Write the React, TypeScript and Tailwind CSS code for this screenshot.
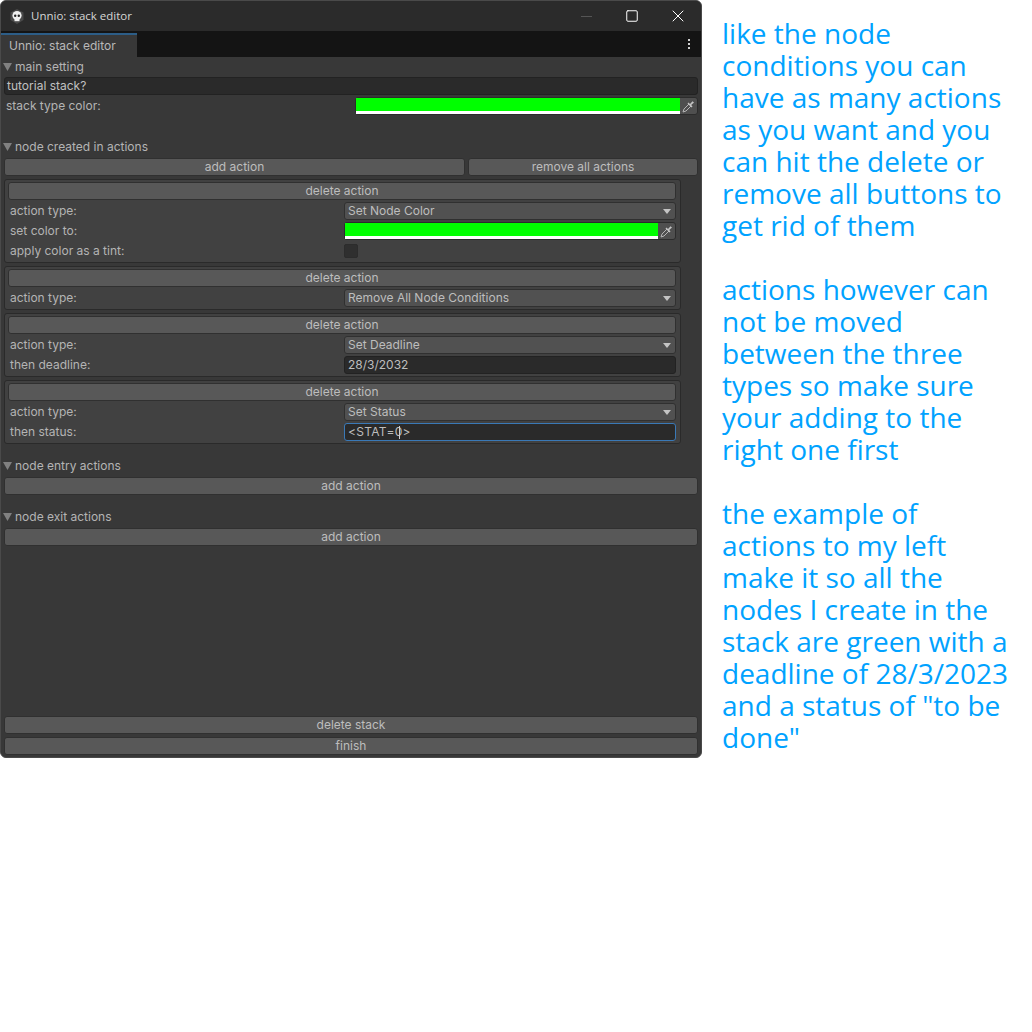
import { Square, X } from 'lucide-react';

const btn =
  'flex h-[18px] items-center justify-center rounded-[3px] border border-[#303030] bg-[#585858] text-[12px] leading-none text-[#bdbdbd]';

function Foldout({ label, className = '' }: { label: string; className?: string }) {
  return (
    <div className={`-mx-[3px] flex h-[19px] items-center pl-[2px] text-[12px] text-[#b4b4b4] ${className}`}>
      <svg width="9" height="8" viewBox="0 0 9 8" className="mr-[3px] mt-[1px]">
        <path d="M0 0H9L4.5 8Z" fill="#808080" />
      </svg>
      {label}
    </div>
  );
}

function Pipette() {
  return (
    <svg width="13" height="13" viewBox="0 0 13 13">
      <path d="M1 12L2 9L7 4L9 6L4 11Z" fill="none" stroke="#b4b4b4" strokeWidth="1" />
      <path d="M6.5 2.5L8 4L10.5 1.2L12 2.6L9.2 5L10.5 6.5L9.5 7.5L5.5 3.5Z" fill="#c4c4c4" />
    </svg>
  );
}

function ColorField({ className = '' }: { className?: string }) {
  return (
    <div className={`flex h-[18px] items-stretch rounded-[3px] border border-[#2c2c2c] bg-[#4f4f4f] ${className}`}>
      <div className="flex flex-1 flex-col">
        <div className="flex-1 bg-[#00ff00]" />
        <div className="h-[3px] bg-white" />
      </div>
      <div className="flex w-[17px] items-center justify-center">
        <Pipette />
      </div>
    </div>
  );
}

function Select({ value }: { value: string }) {
  return (
    <div className="flex h-[18px] w-[332px] items-center justify-between rounded-[3px] border border-[#303030] bg-[#515151] pl-[3px] pr-[4px] text-[12px] text-[#bdbdbd]">
      {value}
      <svg width="8" height="5" viewBox="0 0 8 5">
        <path d="M0 0H8L4 5Z" fill="#c4c4c4" />
      </svg>
    </div>
  );
}

function Row({ label, children }: { label: string; children: React.ReactNode }) {
  return (
    <div className="mt-[2px] flex h-[18px] items-center">
      <div className="w-[336px] pl-[2px] text-[12px] text-[#b4b4b4]">{label}</div>
      {children}
    </div>
  );
}

function ActionBox({ children }: { children: React.ReactNode }) {
  return (
    <div className="mb-[3px] w-[677px] rounded-[3px] border border-[#2a2a2a] bg-[#414141] pb-[2px] pl-[3px] pr-[4px] pt-[2px]">
      <div className={`${btn} w-[668px]`}>delete action</div>
      {children}
    </div>
  );
}

export default function App() {
  return (
    <div className="flex h-[1032px] w-[1032px] items-start bg-white font-['Inter',sans-serif]">
      <div className="flex h-[758px] w-[702px] flex-col overflow-hidden rounded-[6px] border border-[#4a4a4a] bg-[#383838]">
        <div className="flex h-[30px] items-center bg-[#2b2b2b]">
          <svg width="14" height="15" viewBox="0 0 14 15" className="ml-[9px]">
            <path d="M7 0L13.5 3.5V11L7 15L.5 11V3.5Z" fill="#4a4a4a" />
            <circle cx="7" cy="6.5" r="4.6" fill="#f0f0f0" />
            <rect x="4.5" y="9" width="5" height="3.2" fill="#f0f0f0" />
            <circle cx="5.2" cy="6.7" r="1.2" fill="#222" />
            <circle cx="8.8" cy="6.7" r="1.2" fill="#222" />
          </svg>
          <span className="ml-[7px] font-['Open_Sans',sans-serif] text-[11.5px] text-[#d6d6d6]">Unnio: stack editor</span>
          <div className="ml-auto flex items-center">
            <div className="mr-[33px] h-px w-[11px] bg-[#555]" />
            <Square size={14} strokeWidth={1.7} className="mr-[29px] text-white" />
            <X size={20} strokeWidth={1.2} className="mr-[13px] text-white" />
          </div>
        </div>
        <div className="flex h-[26px] items-stretch justify-between bg-[#141414]">
          <div className="mt-[2px] flex w-[136px] items-center border-t-2 border-[#2c5d87] bg-[#383838] pl-[8px] text-[12px] text-[#b9b9b9]">
            Unnio: stack editor
          </div>
          <div className="mr-[11px] flex flex-col justify-center gap-[2px]">
            <div className="size-[2px] bg-[#d0d0d0]" />
            <div className="size-[2px] bg-[#d0d0d0]" />
            <div className="size-[2px] bg-[#d0d0d0]" />
          </div>
        </div>

        <div className="flex flex-1 flex-col px-[3px]">
          <Foldout label="main setting" />
          <div className="mt-px flex h-[18px] items-center rounded-[3px] border border-[#222] bg-[#2a2a2a] pl-[2px] text-[12px] text-[#c0c0c0]">
            tutorial stack?
          </div>
          <div className="mt-[2px] flex h-[18px] items-center">
            <div className="w-[351px] pl-[2px] text-[12px] text-[#b4b4b4]">stack type color:</div>
            <ColorField className="w-[344px]" />
          </div>

          <Foldout label="node created in actions" className="mt-[22px]" />
          <div className="mt-[2px] flex gap-[3px]">
            <div className={`${btn} w-[461px]`}>add action</div>
            <div className={`${btn} flex-1`}>remove all actions</div>
          </div>

          <div className="mt-[3px]">
            <ActionBox>
              <Row label="action type:">
                <Select value="Set Node Color" />
              </Row>
              <Row label="set color to:">
                <ColorField className="w-[332px]" />
              </Row>
              <Row label="apply color as a tint:">
                <div className="h-[14px] w-[14px] rounded-[2px] border border-[#2c2c2c] bg-[#2f2f2f]" />
              </Row>
            </ActionBox>
            <ActionBox>
              <Row label="action type:">
                <Select value="Remove All Node Conditions" />
              </Row>
            </ActionBox>
            <ActionBox>
              <Row label="action type:">
                <Select value="Set Deadline" />
              </Row>
              <Row label="then deadline:">
                <div className="flex h-[18px] w-[332px] items-center rounded-[3px] border border-[#222] bg-[#2a2a2a] pl-[3px] text-[12px] text-[#bdbdbd]">
                  28/3/2032
                </div>
              </Row>
            </ActionBox>
            <ActionBox>
              <Row label="action type:">
                <Select value="Set Status" />
              </Row>
              <Row label="then status:">
                <div className="flex h-[18px] w-[332px] items-center rounded-[3px] border border-[#3a79b7] bg-[#2a2a2a] pl-[3px] text-[12px] tracking-[0.3px] text-[#bdbdbd]">
                  {'<STAT=0'}
                  <span className="-ml-[4px] mr-[3px] h-[13px] w-px bg-[#d0d0d0]" />
                  {'>'}
                </div>
              </Row>
            </ActionBox>
          </div>

          <Foldout label="node entry actions" className="mt-[9px]" />
          <div className={`${btn} mt-[2px]`}>add action</div>
          <Foldout label="node exit actions" className="mt-[12px]" />
          <div className={`${btn} mt-[2px]`}>add action</div>

          <div className={`${btn} mt-auto`}>delete stack</div>
          <div className={`${btn} mb-[2px] mt-[3px]`}>finish</div>
        </div>
      </div>

      <div className="ml-[20px] w-[290px] pt-[17px] font-['Open_Sans',sans-serif] text-[28px] leading-[32px] text-[#00a2ff]">
        <p>like the node conditions you can have as many actions as you want and you can hit the delete or remove all buttons to get rid of them</p>
        <p className="mt-[32px]">actions however can not be moved between the three types so make sure your adding to the right one first</p>
        <p className="mt-[32px]">the example of actions to my left make it so all the nodes I create in the stack are green with a deadline of 28/3/2023 and a status of "to be done"</p>
      </div>
    </div>
  );
}
